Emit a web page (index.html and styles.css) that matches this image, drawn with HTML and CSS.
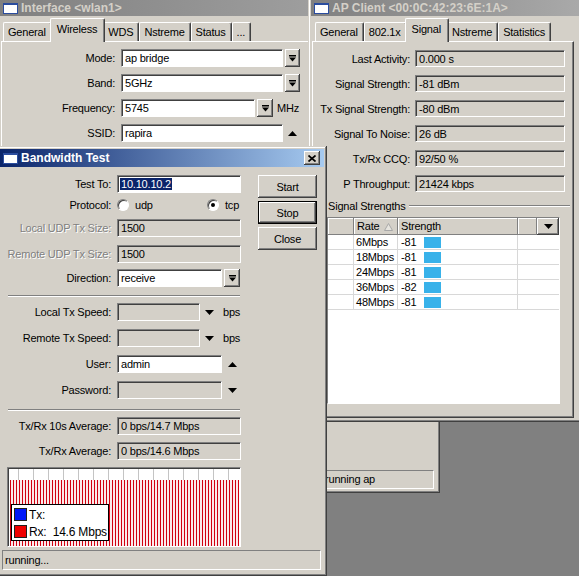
FILE: index.html
```html
<!DOCTYPE html>
<html>
	<head>
		<link rel="stylesheet" href="styles.css">
	</head>
	<body>
	<div class="desk">

	<!-- interface window, mostly covered -->
	<div class="win w-iface">
		<div class="title off"><span class="ico"></span>Interface &lt;wlan1&gt;</div>
		<div class="tabs">
			<span class="tab">General</span>
			<span class="tab on">Wireless</span>
			<span class="tab">WDS</span>
			<span class="tab">Nstreme</span>
			<span class="tab">Status</span>
			<span class="tab">...</span>
		</div>
		<div class="panel p-iface">
			<div class="row"><label>Mode:</label><span class="fld wht w162">ap bridge</span><span class="btn dd"><svg width="7" height="7" viewBox="0 0 7 7"><rect width="7" height="1.5"/><path d="M0 2.5h7L3.5 6.5z"/></svg></span></div>
			<div class="row"><label>Band:</label><span class="fld wht w162">5GHz</span><span class="btn dd"><svg width="7" height="7" viewBox="0 0 7 7"><rect width="7" height="1.5"/><path d="M0 2.5h7L3.5 6.5z"/></svg></span></div>
			<div class="row"><label>Frequency:</label><span class="fld wht w134">5745</span><span class="btn dd w16"><svg width="7" height="7" viewBox="0 0 7 7"><rect width="7" height="1.5"/><path d="M0 2.5h7L3.5 6.5z"/></svg></span><span class="unit mhz">MHz</span></div>
			<div class="row"><label>SSID:</label><span class="fld wht w162">rapira</span><svg class="arr a-ssid" width="9" height="5" viewBox="0 0 9 5"><path d="M4.5 0L9 5H0z"/></svg></div>
		</div>
		<div class="grow"></div>
		<div class="sbar s-iface"><span class="seg s1"></span><span class="seg s2">running ap</span></div>
	</div>

	<!-- ap client window -->
	<div class="win w-ap">
		<div class="title off"><span class="ico"></span>AP Client &lt;00:0C:42:23:6E:1A&gt;</div>
		<div class="tabs">
			<span class="tab">General</span>
			<span class="tab">802.1x</span>
			<span class="tab on">Signal</span>
			<span class="tab">Nstreme</span>
			<span class="tab">Statistics</span>
		</div>
		<div class="panel p-ap">
			<div class="row"><label>Last Activity:</label><span class="fld w150">0.000 s</span></div>
			<div class="row"><label>Signal Strength:</label><span class="fld w150">-81 dBm</span></div>
			<div class="row"><label>Tx Signal Strength:</label><span class="fld w150">-80 dBm</span></div>
			<div class="row"><label>Signal To Noise:</label><span class="fld w150">26 dB</span></div>
			<div class="row"><label>Tx/Rx CCQ:</label><span class="fld w150">92/50 %</span></div>
			<div class="row"><label>P Throughput:</label><span class="fld w150">21424 kbps</span></div>

			<div class="group"><span>Signal Strengths</span></div>
			<div class="list">
				<div class="lhead">
					<span class="c0"></span>
					<span class="c1">Rate<svg width="9" height="8" viewBox="0 0 9 8"><path d="M4.5 0.5L8.5 7.5H0.5z" fill="#e6e4de" stroke="#a8a8a8"/></svg></span>
					<span class="c2">Strength</span>
					<span class="c3"></span>
					<span class="hbtn"><svg width="9" height="5" viewBox="0 0 9 5"><path d="M0 0h9L4.5 5z"/></svg></span>
				</div>
				<div class="lrow"><span class="c0"></span><span class="c1">6Mbps</span><span class="c2"><span class="num">-81</span><i class="bar"></i></span><span class="c3"></span></div>
				<div class="lrow"><span class="c0"></span><span class="c1">18Mbps</span><span class="c2"><span class="num">-81</span><i class="bar"></i></span><span class="c3"></span></div>
				<div class="lrow"><span class="c0"></span><span class="c1">24Mbps</span><span class="c2"><span class="num">-81</span><i class="bar"></i></span><span class="c3"></span></div>
				<div class="lrow"><span class="c0"></span><span class="c1">36Mbps</span><span class="c2"><span class="num">-82</span><i class="bar"></i></span><span class="c3"></span></div>
				<div class="lrow"><span class="c0"></span><span class="c1">48Mbps</span><span class="c2"><span class="num">-81</span><i class="bar"></i></span><span class="c3"></span></div>
			</div>
		</div>
	</div>

	<!-- bandwidth test, active -->
	<div class="win w-bt">
		<div class="title on"><span class="ico"></span>Bandwidth Test<span class="btn xbtn"><svg width="8" height="7" viewBox="0 0 8 7"><path d="M0.5 0.5l7 6M7.5 0.5l-7 6" stroke="#000" stroke-width="1.7"/></svg></span></div>
		<div class="bt-body">
			<div class="form">
				<div class="row mb3"><label>Test To:</label><span class="fld wht w124"><span class="hl">10.10.10.2</span></span></div>
				<div class="row mb5"><label>Protocol:</label><span class="opt o1"><i class="radio"></i>udp</span><span class="opt"><i class="radio chk"></i>tcp</span></div>
				<div class="row"><label class="dis">Local UDP Tx Size:</label><span class="fld w124">1500</span></div>
				<div class="row mb6"><label class="dis">Remote UDP Tx Size:</label><span class="fld w124">1500</span></div>
				<div class="row"><label>Direction:</label><span class="fld wht w105">receive</span><span class="btn dd w16"><svg width="7" height="7" viewBox="0 0 7 7"><rect width="7" height="1.5"/><path d="M0 2.5h7L3.5 6.5z"/></svg></span></div>
				<div class="sep"></div>
				<div class="row"><label>Local Tx Speed:</label><span class="fld w83"></span><svg class="arr" width="9" height="5" viewBox="0 0 9 5"><path d="M0 0h9L4.5 5z"/></svg><span class="unit">bps</span></div>
				<div class="row"><label>Remote Tx Speed:</label><span class="fld w83"></span><svg class="arr" width="9" height="5" viewBox="0 0 9 5"><path d="M0 0h9L4.5 5z"/></svg><span class="unit">bps</span></div>
				<div class="row"><label>User:</label><span class="fld wht w105">admin</span><svg class="arr a-usr" width="9" height="5" viewBox="0 0 9 5"><path d="M4.5 0L9 5H0z"/></svg></div>
				<div class="row mb10"><label>Password:</label><span class="fld w105"></span><svg class="arr a-usr" width="9" height="5" viewBox="0 0 9 5"><path d="M0 0h9L4.5 5z"/></svg></div>
				<div class="sep"></div>
				<div class="row mb7"><label>Tx/Rx 10s Average:</label><span class="fld w124">0 bps/14.7 Mbps</span></div>
				<div class="row mb7"><label>Tx/Rx Average:</label><span class="fld w124">0 bps/14.6 Mbps</span></div>
				<div class="graph">
					<div class="bars"></div>
					<div class="legend">
						<div class="li"><i class="sq tx"></i>Tx:</div>
						<div class="li"><i class="sq rx"></i>Rx:&nbsp; 14.6 Mbps</div>
					</div>
				</div>
			</div>
			<div class="btns">
				<span class="btn pb">Start</span>
				<span class="btn pb def">Stop</span>
				<span class="btn pb">Close</span>
			</div>
		</div>
		<div class="sbar s-bt"><span class="seg">running...</span></div>
	</div>

	</div>
	</body>
</html>
```

FILE: styles.css
```css
body {
	margin: 0;
	background: #808080;
	font-family: "Liberation Sans", Arial, sans-serif;
	font-size: 11px;
	letter-spacing: -0.2px;
	color: #000;
}
.desk {
	position: relative;
	width: 579px;
	height: 576px;
	overflow: hidden;
}

/* windows */
.win {
	position: absolute;
	box-sizing: border-box;
	padding: 3px;
	display: flex;
	flex-direction: column;
	background: #d4d0c8;
	box-shadow: inset -1px -1px #404040, inset 1px 1px #d4d0c8, inset -2px -2px #808080, inset 2px 2px #fff;
}
.w-iface { left: -3px; top: -3px; width: 443px; height: 496px; z-index: 1; }
.w-ap { left: 308px; top: -3px; width: 280px; height: 425px; z-index: 2; }
.w-bt { left: -3px; top: 146px; width: 330px; height: 430px; z-index: 3; }

.title {
	display: flex;
	align-items: center;
	height: 16px;
	font-size: 12px;
	font-weight: bold;
	letter-spacing: 0;
	white-space: nowrap;
}
.title.off {
	background: linear-gradient(90deg, #808080, #aaaaaa);
	color: #d4d0c8;
}
.title.on {
	height: 18px;
	background: linear-gradient(90deg, #0a246a, #a6caf0);
	color: #fff;
}
.ico {
	width: 13px;
	height: 8px;
	margin: 0 3px 0 3px;
	background: #fff;
	border: 1px solid #2a4c9e;
	border-top-width: 2px;
}
.xbtn {
	margin-left: auto;
	margin-right: 4px;
	width: 16px;
	height: 14px;
	display: flex;
	align-items: center;
	justify-content: center;
}

/* raised button */
.btn {
	box-sizing: border-box;
	background: #d4d0c8;
	box-shadow: inset -1px -1px #404040, inset 1px 1px #fff, inset -2px -2px #808080, inset 2px 2px #d4d0c8;
}

/* tabs */
.tabs {
	display: flex;
	align-items: flex-end;
	height: 23px;
	margin-top: 2px;
	padding-left: 3px;
	position: relative;
	z-index: 1;
}
.w-ap .tabs { padding-left: 4px; }
.tab {
	height: 19px;
	box-sizing: border-box;
	padding: 3px 5px 0 4px;
	line-height: 13px;
	background: #d4d0c8;
	border-top: 1px solid #fff;
	border-left: 1px solid #fff;
	border-right: 1px solid #404040;
	border-radius: 2px 2px 0 0;
	box-shadow: inset -1px 0 #808080;
	white-space: nowrap;
}
.tab.on {
	height: 24px;
	margin: 0 -2px -1px;
	padding-top: 4px;
	padding-left: 6px;
	padding-right: 7px;
	position: relative;
	z-index: 1;
}

.panel {
	box-sizing: border-box;
	border: 1px solid;
	border-color: #fff #404040 #404040 #fff;
	box-shadow: inset -1px -1px #808080;
}
.p-iface {
	width: 330px;
	height: 360px;
	margin-left: 1px;
	padding-top: 7px;
}
.p-ap {
	width: 262px;
	height: 377px;
	margin-left: 1px;
	padding-top: 8px;
}

/* form rows */
.row {
	display: flex;
	align-items: center;
	height: 18px;
	margin-bottom: 8px;
	white-space: nowrap;
}
.row label {
	flex: none;
	text-align: right;
	margin-right: 6px;
}
.p-iface .row { margin-bottom: 7px; }
.p-iface label { width: 113px; }
.p-ap .row { height: 17px; }
.p-ap label { width: 97px; margin-right: 5px; }
.form label { width: 111px; }
.dis {
	color: #808080;
	text-shadow: 1px 1px #fff;
}
.mb3 { margin-bottom: 3px; }
.mb5 { margin-bottom: 5px; }
.mb6 { margin-bottom: 6px; }
.mb7 { margin-bottom: 7px; }
.mb10 { margin-bottom: 10px; }

.fld {
	flex: none;
	box-sizing: border-box;
	height: 100%;
	padding-left: 3px;
	line-height: 16px;
	background: #d4d0c8;
	border: 1px solid;
	border-color: #808080 #fff #fff #808080;
	box-shadow: inset 1px 1px #404040;
	overflow: hidden;
}
.fld.wht { background: #fff; }
.w83 { width: 83px; }
.w105 { width: 105px; }
.w124 { width: 124px; }
.w134 { width: 134px; }
.w150 { width: 150px; }
.w162 { width: 162px; }
.hl {
	background: #0a246a;
	color: #fff;
	margin-left: -1px;
	padding: 0 1px;
}

.dd {
	flex: none;
	width: 15px;
	height: 18px;
	margin-left: 2px;
	display: flex;
	align-items: center;
	justify-content: center;
}
.dd.w16 { width: 16px; }
.unit { margin-left: 9px; }
.unit.mhz { margin-left: 4px; }
.arr { flex: none; margin-left: 5px; }
.a-ssid { margin-left: 5px; }
.a-usr { margin-left: 6px; }

.opt {
	display: flex;
	align-items: center;
}
.o1 { width: 90px; }
.radio {
	position: relative;
	display: inline-block;
	width: 12px;
	height: 12px;
	box-sizing: border-box;
	margin-right: 6px;
	border-radius: 50%;
	background: #fff;
	border: 1px solid;
	border-color: #808080 #fff #fff #808080;
	box-shadow: inset 1px 1px #404040;
}
.radio.chk::after {
	content: "";
	position: absolute;
	left: 3px;
	top: 3px;
	width: 4px;
	height: 4px;
	border-radius: 50%;
	background: #000;
}

.sep {
	width: 232px;
	margin: 0 0 6px 8px;
	border-top: 1px solid #808080;
	border-bottom: 1px solid #fff;
}

/* bandwidth test body */
.bt-body {
	display: grid;
	grid-template-columns: 241px 59px;
	column-gap: 17px;
	padding-top: 8px;
}
.btns {
	display: flex;
	flex-direction: column;
	gap: 3px;
}
.pb {
	height: 23px;
	display: flex;
	align-items: center;
	justify-content: center;
}
.pb.def { border: 1px solid #000; }

.graph {
	position: relative;
	box-sizing: border-box;
	width: 234px;
	height: 80px;
	margin-left: 7px;
	padding: 12px 0 0 2px;
	border: 1px solid;
	border-color: #808080 #fff #fff #808080;
	box-shadow: inset 1px 1px #404040;
	background: repeating-linear-gradient(90deg, transparent 0 10px, #c4c4c4 10px 11px, transparent 11px 15px), #fff;
}
.bars {
	height: 100%;
	margin-right: 1px;
	background: repeating-linear-gradient(90deg, #d00010 0 1px, #fbeaea 1px 3px);
}
.legend {
	position: absolute;
	left: 3px;
	top: 36px;
	box-sizing: border-box;
	width: 98px;
	height: 37px;
	padding: 3px 0 0 2px;
	background: #fff;
	border: 1px solid #000;
}
.li {
	display: flex;
	align-items: center;
	height: 13px;
	margin-bottom: 4px;
	font-size: 12px;
}
.sq {
	width: 13px;
	height: 13px;
	box-sizing: border-box;
	margin-right: 2px;
	border: 1px solid #202020;
}
.sq.tx { background: #0018f8; }
.sq.rx { background: #f00000; }

/* status bars */
.sbar {
	display: flex;
	flex: none;
	white-space: nowrap;
}
.seg {
	box-sizing: border-box;
	border: 1px solid;
	border-color: #808080 #fff #fff #808080;
	padding-left: 2px;
}
.s-bt {
	height: 20px;
	margin: 3px 3px 0 2px;
}
.s-bt .seg { flex: 1; line-height: 18px; }
.grow { flex: 1; }
.s-iface {
	height: 19px;
	margin: 0 3px 1px 0;
}
.s-iface .seg { line-height: 17px; }
.s1 { width: 318px; margin-right: 2px; }
.s2 { flex: 1; padding-left: 4px; }

/* signal strengths list */
.group {
	display: flex;
	align-items: center;
	height: 12px;
	padding-left: 15px;
	margin-right: 3px;
}
.group::after {
	content: "";
	flex: 1;
	margin-left: 3px;
	border-top: 1px solid #808080;
	border-bottom: 1px solid #fff;
}
.list {
	box-sizing: border-box;
	width: 233px;
	height: 187px;
	margin: 5px 0 0 14px;
	background: #fff;
	border: 1px solid;
	border-color: #808080 #fff #fff #808080;
}
.lhead, .lrow {
	display: flex;
	white-space: nowrap;
}
.lhead { height: 17px; }
.lhead span {
	box-sizing: border-box;
	background: #d4d0c8;
	box-shadow: inset -1px -1px #808080, inset 1px 1px #fff;
	line-height: 17px;
	padding-left: 3px;
}
.c0 { width: 26px; flex: none; }
.c1 { width: 44px; flex: none; }
.c2 { width: 120px; flex: none; }
.c3 { flex: 1; }
.lhead .c1 {
	display: flex;
	align-items: center;
	justify-content: space-between;
	padding-right: 5px;
}
.lhead .hbtn {
	width: 22px;
	flex: none;
	display: flex;
	align-items: center;
	justify-content: center;
	padding: 0;
	box-shadow: inset -1px -1px #404040, inset 1px 1px #fff, inset -2px -2px #808080;
}
.lrow { height: 15px; }
.lrow span {
	box-sizing: border-box;
	border-right: 1px solid #d8d8d8;
	border-bottom: 1px solid #d8d8d8;
	line-height: 14px;
}
.lrow .c1 { padding-left: 2px; }
.lrow .c2 {
	display: flex;
	align-items: center;
	padding-left: 3px;
}
.lrow .c3 { border-right: 0; }
.lrow .c2 .num {
	width: 23px;
	border: 0;
}
.bar {
	width: 17px;
	height: 11px;
	background: #38b2ea;
}
```
